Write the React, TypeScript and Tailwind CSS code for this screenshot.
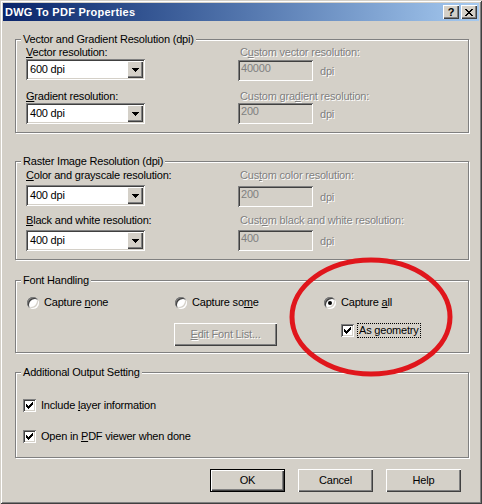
import React from 'react';

// classic win2k bevels
const winFrame =
  'shadow-[inset_1px_1px_#d4d0c8,inset_-1px_-1px_#404040,inset_2px_2px_#ffffff,inset_-2px_-2px_#808080]';
const raised =
  'shadow-[inset_1px_1px_#ffffff,inset_-1px_-1px_#404040,inset_-2px_-2px_#808080]';
const sunken =
  'shadow-[inset_1px_1px_#808080,inset_-1px_-1px_#ffffff,inset_2px_2px_#404040,inset_-2px_-2px_#d4d0c8]';
const disabledText = 'text-[#808080] [text-shadow:1px_1px_0_#ffffff]';

function U({ children }: { children: React.ReactNode }) {
  return <span className="underline underline-offset-[1px]">{children}</span>;
}

function TitleBar() {
  return (
    <div className="mx-[3px] mt-[3px] flex h-[18px] items-center bg-linear-to-r from-[#0a246a] to-[#a6caf0]">
      <span className="pl-[2px] font-bold tracking-[0.25px] text-white">DWG To PDF Properties</span>
      <div className="ml-auto mr-[2px] flex gap-[2px]">
        <div className={`flex h-[14px] w-[16px] items-center justify-center bg-[#d4d0c8] text-[11px] font-bold leading-[11px] ${raised}`}>
          ?
        </div>
        <div className={`flex h-[14px] w-[16px] items-center justify-center bg-[#d4d0c8] ${raised}`}>
          <svg width="8" height="7" viewBox="0 0 8 7" shapeRendering="crispEdges">
            <path
              d="M0 0h2v1h-2zM6 0h2v1h-2zM1 1h2v1h-2zM5 1h2v1h-2zM2 2h4v1h-4zM3 3h2v1h-2zM2 4h4v1h-4zM1 5h2v1h-2zM5 5h2v1h-2zM0 6h2v1h-2zM6 6h2v1h-2z"
              fill="#000"
            />
          </svg>
        </div>
      </div>
    </div>
  );
}

function Group({ title, className, children }: { title: string; className?: string; children: React.ReactNode }) {
  return (
    <fieldset className={`min-w-0 border border-[#808080] shadow-[inset_1px_1px_#ffffff,1px_1px_#ffffff] ${className ?? ''}`}>
      <legend className="ml-[5px] bg-[#d4d0c8] px-[2px] leading-[13px]">{title}</legend>
      {children}
    </fieldset>
  );
}

function Combo({ value }: { value: string }) {
  return (
    <div className={`flex h-[21px] w-[119px] items-center bg-white p-[2px] ${sunken}`}>
      <span className="flex-1 pl-[2px]">{value}</span>
      <div className={`flex h-[17px] w-[16px] items-center justify-center bg-[#d4d0c8] ${raised}`}>
        <svg width="7" height="4" viewBox="0 0 7 4" shapeRendering="crispEdges">
          <path d="M0 0h7v1h-1v1h-1v1h-1v1h-1v-1h-1v-1h-1v-1h-1z" fill="#000" />
        </svg>
      </div>
    </div>
  );
}

function Field({ value }: { value: string }) {
  return (
    <div className="flex items-center">
      <div className={`h-[21px] w-[75px] bg-[#d4d0c8] px-[3px] pt-[2px] text-[#808080] ${sunken}`}>{value}</div>
      <span className={`ml-[7px] mt-[2px] ${disabledText}`}>dpi</span>
    </div>
  );
}

function Radio({ checked }: { checked?: boolean }) {
  return (
    <span className="flex h-[12px] w-[12px] items-center justify-center rounded-full bg-white shadow-[inset_1px_1px_#808080,inset_-1px_-1px_#ffffff,inset_2px_2px_#404040,inset_-2px_-2px_#d4d0c8]">
      {checked && <span className="h-[4px] w-[4px] rounded-full bg-black" />}
    </span>
  );
}

function Check({ checked }: { checked?: boolean }) {
  return (
    <span className={`flex h-[13px] w-[13px] shrink-0 items-center justify-center bg-white ${sunken}`}>
      {checked && (
        <svg width="7" height="7" viewBox="0 0 7 7" shapeRendering="crispEdges">
          <path
            d="M6 0h1v1h-1zM5 1h2v1h-2zM0 2h1v1h-1zM4 2h3v1h-3zM0 3h2v1h-2zM3 3h3v1h-3zM0 4h5v1h-5zM1 5h3v1h-3zM2 6h1v1h-1z"
            fill="#000"
          />
        </svg>
      )}
    </span>
  );
}

function RadioItem({ checked, label }: { checked?: boolean; label: React.ReactNode }) {
  return (
    <div className="flex h-[13px] items-center gap-[5px]">
      <Radio checked={checked} />
      <span>{label}</span>
    </div>
  );
}

function CheckItem({ label, className }: { label: React.ReactNode; className?: string }) {
  return (
    <div className={`flex h-[13px] items-center gap-[5px] ${className ?? ''}`}>
      <Check checked />
      <span>{label}</span>
    </div>
  );
}

function PushButton({ children, isDefault }: { children: React.ReactNode; isDefault?: boolean }) {
  return (
    <button
      className={`flex h-[23px] w-[75px] items-center justify-center bg-[#d4d0c8] ${
        isDefault ? 'border border-black' : ''
      } ${raised}`}
    >
      {children}
    </button>
  );
}

export default function App() {
  return (
    <div
      className={`relative flex h-[504px] w-[482px] flex-col bg-[#d4d0c8] font-['Liberation_Sans',Arial,sans-serif] text-[11px] leading-[13px] tracking-[-0.2px] text-black ${winFrame}`}
    >
      <TitleBar />

      <div className="flex flex-col pl-[15px] pr-[13px]">
        {/* Vector / gradient */}
        <Group title="Vector and Gradient Resolution (dpi)" className="mt-[12px]">
          <div className="flex flex-col pb-[8px] pl-[10px]">
            <div className="flex">
              <span className="w-[212px]">
                <U>V</U>ector resolution:
              </span>
              <span className={`pl-[2px] ${disabledText}`}>
                C<U>u</U>stom vector resolution:
              </span>
            </div>
            <div className="flex items-start">
              <Combo value="600 dpi" />
              <div className="ml-[93px] mt-[1px]">
                <Field value="40000" />
              </div>
            </div>
            <div className="mt-[9px] flex">
              <span className="w-[212px]">
                <U>G</U>radient resolution:
              </span>
              <span className={`pl-[2px] ${disabledText}`}>
                Custom gra<U>d</U>ient resolution:
              </span>
            </div>
            <div className="flex items-start">
              <Combo value="400 dpi" />
              <div className="ml-[93px]">
                <Field value="200" />
              </div>
            </div>
          </div>
        </Group>

        {/* Raster */}
        <Group title="Raster Image Resolution (dpi)" className="mt-[22px]">
          <div className="flex flex-col pb-[8px] pl-[10px] pt-[1px]">
            <div className="flex">
              <span className="w-[212px]">
                <U>C</U>olor and grayscale resolution:
              </span>
              <span className={`pl-[2px] ${disabledText}`}>
                Cus<U>t</U>om color resolution:
              </span>
            </div>
            <div className="mt-[3px] flex items-start">
              <Combo value="400 dpi" />
              <div className="ml-[93px] mt-[1px]">
                <Field value="200" />
              </div>
            </div>
            <div className="mt-[7px] flex">
              <span className="w-[212px]">
                <U>B</U>lack and white resolution:
              </span>
              <span className={`pl-[2px] ${disabledText}`}>
                Cust<U>o</U>m black and white resolution:
              </span>
            </div>
            <div className="mt-[3px] flex items-start">
              <Combo value="400 dpi" />
              <div className="ml-[93px]">
                <Field value="400" />
              </div>
            </div>
          </div>
        </Group>

        {/* Fonts */}
        <Group title="Font Handling" className="mt-[14px]">
          <div className="grid grid-cols-[148px_149px_1fr] gap-y-[14px] pb-[6px] pl-[11px] pt-[9px]">
            <RadioItem
              label={
                <>
                  Capture <U>n</U>one
                </>
              }
            />
            <RadioItem
              label={
                <>
                  Capture so<U>m</U>e
                </>
              }
            />
            <RadioItem
              checked
              label={
                <>
                  Capture <U>a</U>ll
                </>
              }
            />
            <div />
            <button className={`-ml-[1px] flex h-[23px] w-[103px] items-center justify-center bg-[#d4d0c8] ${raised}`}>
              <span className={disabledText}>
                <U>E</U>dit Font List...
              </span>
            </button>
            <div className="ml-[17px] flex h-[15px] items-center">
              <Check checked />
              <span className="ml-[3px] border border-dotted border-black px-[1px] leading-[13px]">As geometry</span>
            </div>
          </div>
        </Group>

        {/* Output */}
        <Group title="Additional Output Setting" className="mt-[13px]">
          <div className="flex flex-col pb-[14px] pl-[7px] pt-[20px]">
            <CheckItem
              label={
                <>
                  Include <U>l</U>ayer information
                </>
              }
            />
            <CheckItem
              className="mt-[18px]"
              label={
                <>
                  Open in <U>P</U>DF viewer when done
                </>
              }
            />
          </div>
        </Group>

        <div className="mt-[11px] flex justify-end gap-[13px] pr-[8px]">
          <PushButton isDefault>OK</PushButton>
          <PushButton>Cancel</PushButton>
          <PushButton>Help</PushButton>
        </div>
      </div>

      {/* red annotation circle */}
      <svg className="pointer-events-none absolute left-0 top-0" width="482" height="504" viewBox="0 0 482 504">
        <ellipse cx="371" cy="317" rx="79" ry="57" fill="none" stroke="#e0161c" strokeWidth="5" />
      </svg>
    </div>
  );
}
